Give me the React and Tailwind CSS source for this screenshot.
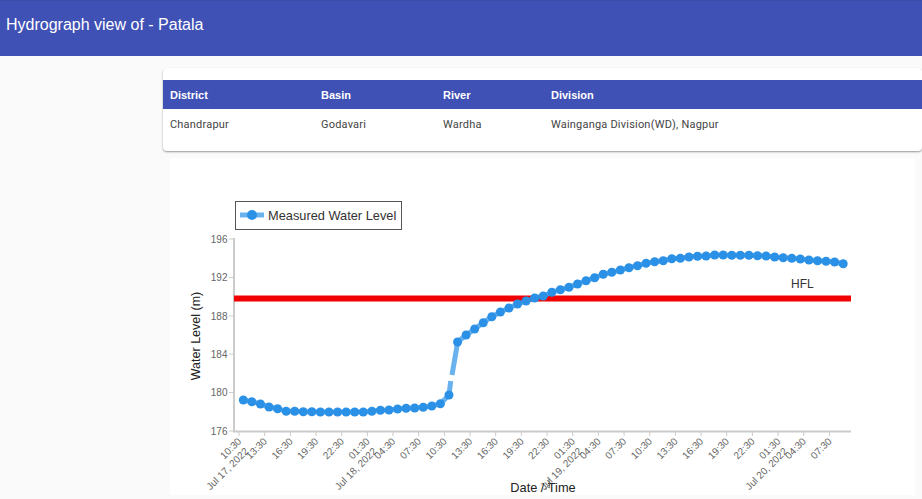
const ys = [400,401.7,404,407,408.7,411.3,411.3,411.7,411.7,412,412,412,412,412,412,411.3,410.3,410,409,408.3,408,407.3,406,403.7,395,342,335,329,322.7,316.7,312,308,304,301,298,296,292.3,289.7,287.3,284,280.7,277.7,274.3,272.3,270,267.7,265.7,263.3,261.7,260.7,258.7,258.3,257,256.3,256,255,255,255.3,255.3,255.3,255.7,256,257,257.7,258.3,259,260,260.7,261.3,262,263.7];
const pts = ys.map((y, i) => [243.3 + i * 8.57, y]);
const linePts = (a) => a.map((p) => p.join(",")).join(" ");
const yTicks = [[196,239],[192,277.5],[188,316],[184,354],[180,392.5],[176,431]];
const times = ["10:30","13:30","16:30","19:30","22:30","01:30","04:30","07:30","10:30","13:30","16:30","19:30","22:30","01:30","04:30","07:30","10:30","13:30","16:30","19:30","22:30","01:30","04:30","07:30"];
const dates = { 0: "Jul 17, 2022", 5: "Jul 18, 2022", 13: "Jul 19, 2022", 21: "Jul 20, 2022" };

function Chart() {
  return (
    <svg width="745" height="337" viewBox="170 158 745 337" className="block" style={{ fontFamily: '"Liberation Sans", Arial, sans-serif' }}>
      <rect x="235.5" y="201.5" width="166" height="28" fill="#fff" stroke="#555" strokeWidth="1" />
      <line x1="240" y1="215" x2="264" y2="215" stroke="#2b91e6" strokeOpacity="0.7" strokeWidth="5" />
      <circle cx="252" cy="215" r="5" fill="#2b91e6" />
      <text x="268" y="220" fontSize="12.8" fill="#333">Measured Water Level</text>

      <line x1="234" y1="238" x2="234" y2="432" stroke="#ccc" strokeWidth="2" />
      <line x1="233" y1="431.5" x2="851" y2="431.5" stroke="#ccc" strokeWidth="2" />
      {yTicks.map(([v, y]) => (
        <g key={v}>
          <line x1="229" x2="233" y1={y} y2={y} stroke="#ccc" />
          <text x="227.5" y={y + 3.5} fontSize="10" fill="#666" textAnchor="end">{v}</text>
        </g>
      ))}
      {times.map((t, i) => {
        const x = 239 + i * 25.67;
        return (
          <g key={i}>
            <line x1={x} x2={x} y1="432" y2="436" stroke="#ccc" />
            <g transform={`translate(${x + 3} 442) rotate(-45)`} fontSize="10" fill="#666" textAnchor="end">
              <text>{t}</text>
              {dates[i] && <text x="-2" y="12">{dates[i]}</text>}
            </g>
          </g>
        );
      })}

      <line x1="234" y1="298.5" x2="851" y2="298.5" stroke="#f00000" strokeWidth="6" />
      <text x="791" y="288" fontSize="12" fill="#333">HFL</text>

      <polyline points={linePts(pts.slice(0, 25))} fill="none" stroke="#2b91e6" strokeOpacity="0.7" strokeWidth="5" />
      <line x1="449" y1="395" x2="450.7" y2="381" stroke="#2b91e6" strokeOpacity="0.7" strokeWidth="5" />
      <line x1="452" y1="375" x2="457.7" y2="342" stroke="#2b91e6" strokeOpacity="0.7" strokeWidth="5" />
      <polyline points={linePts(pts.slice(25))} fill="none" stroke="#2b91e6" strokeOpacity="0.7" strokeWidth="5" />
      {pts.map(([x, y], i) => <circle key={i} cx={x} cy={y} r="4.5" fill="#2b91e6" />)}

      <text transform="translate(200 336) rotate(-90)" fontSize="12.5" fill="#222" textAnchor="middle">Water Level (m)</text>
      <text x="543" y="492" fontSize="12.8" fill="#222" textAnchor="middle">Date / Time</text>
      <path d="M549 479 L549.5 488 L547.5 486.5 L545.5 490" fill="none" stroke="#555" strokeWidth="0.8" />
    </svg>
  );
}

export default function App() {
  return (
    <div className="h-[499px] w-[922px] overflow-hidden bg-[#fafafa]" style={{ fontFamily: 'Roboto, sans-serif' }}>
      <header className="h-14 border-t border-[#3a4ba8] bg-[#3f51b5] pl-[6px] pt-[14px] text-[16px] leading-5 text-white" style={{ fontFamily: '"Liberation Sans", Arial, sans-serif' }}>
        Hydrograph view of - Patala
      </header>
      <div className="ml-[163px] mt-3 h-[83px] rounded bg-white pt-3 shadow-[0_1px_2px_rgba(0,0,0,0.4)]">
        <div className="flex h-[29px] items-center bg-[#3f51b5] pt-[2px] text-[11px] font-bold text-white" style={{ fontFamily: '"Liberation Sans", Arial, sans-serif' }}>
          <div className="w-[158px] pl-[7px]">District</div>
          <div className="w-[122px]">Basin</div>
          <div className="w-[108px]">River</div>
          <div>Division</div>
        </div>
        <div className="flex h-[31px] items-center pt-[2px] text-[11px] tracking-[0.2px] text-[#444]">
          <div className="w-[158px] pl-[7px]">Chandrapur</div>
          <div className="w-[122px]">Godavari</div>
          <div className="w-[108px]">Wardha</div>
          <div>Wainganga Division(WD), Nagpur</div>
        </div>
      </div>
      <div className="ml-[170px] mt-[7px] h-[337px] w-[745px] bg-white">
        <Chart />
      </div>
    </div>
  );
}
